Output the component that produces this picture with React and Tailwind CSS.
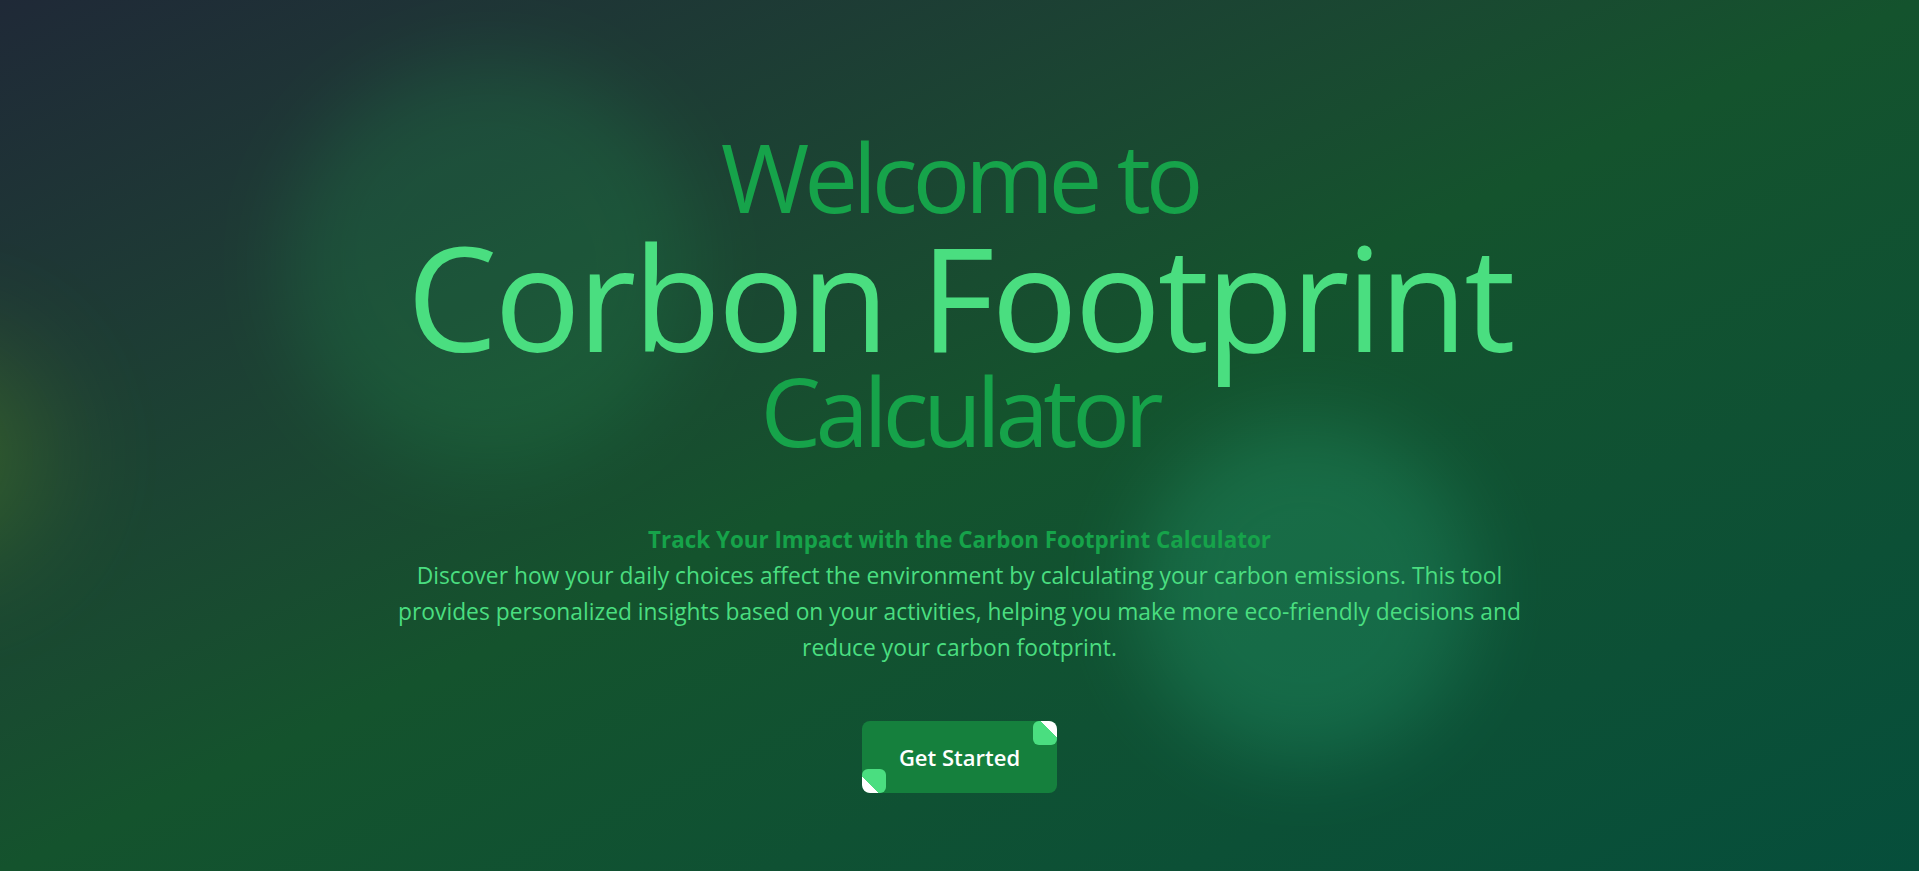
import React from 'react';

export default function App() {
    return (
        <div
            className="relative min-h-screen w-full overflow-hidden bg-linear-to-br from-[#1f2937] via-[#14532d] to-[#064e3b]"
            style={{ fontFamily: '"Open Sans", "Noto Sans", sans-serif' }}
        >
            {/* Background blobs */}
            <div className="absolute top-[60px] left-[285px] h-[410px] w-[410px] rounded-full bg-[#22c55e] opacity-15 blur-2xl"></div>
            <div className="absolute top-[420px] left-[1135px] h-[340px] w-[340px] rounded-full bg-[#34d399] opacity-20 blur-2xl"></div>
            <div className="absolute top-[350px] left-[-170px] h-[210px] w-[210px] rounded-full bg-[#84cc16] opacity-25 blur-3xl"></div>

            {/* Hero */}
            <div className="relative flex flex-col items-center px-4 pt-[128px] text-center">
                <h1 className="flex flex-col items-center">
                    <span className="text-[96px] leading-none tracking-[-0.055em] text-[#16a34a]">Welcome to</span>
                    <span className="text-[144px] leading-none tracking-[-0.023em] text-[#4ade80]">Corbon Footprint</span>
                    <span className="-mt-1.5 text-[96px] leading-none tracking-[-0.056em] text-[#16a34a]">Calculator</span>
                </h1>

                <div className="mt-16 max-w-[1150px] leading-[36px]">
                    <p className="text-[22.4px] font-bold text-[#16a34a]">Track Your Impact with the Carbon Footprint Calculator</p>
                    <p className="text-[22.8px] text-[#4ade80]">
                        Discover how your daily choices affect the environment by calculating your carbon emissions. This tool provides personalized insights based on your activities, helping you make more eco-friendly decisions and reduce your carbon footprint.
                    </p>
                </div>

                <button className="relative mt-[55px] overflow-hidden rounded-lg bg-[#15803d] px-[37px] py-5 text-[22px] leading-8 font-semibold text-white">
                    <span className="absolute top-0 right-0 h-6 w-6 rounded-md bg-[linear-gradient(to_top_right,#4ade80_65%,#ffffff_65%)]"></span>
                    <span className="absolute bottom-0 left-0 h-6 w-6 rounded-md bg-[linear-gradient(to_bottom_left,#4ade80_65%,#ffffff_65%)]"></span>
                    Get Started
                </button>
            </div>
        </div>
    );
}
